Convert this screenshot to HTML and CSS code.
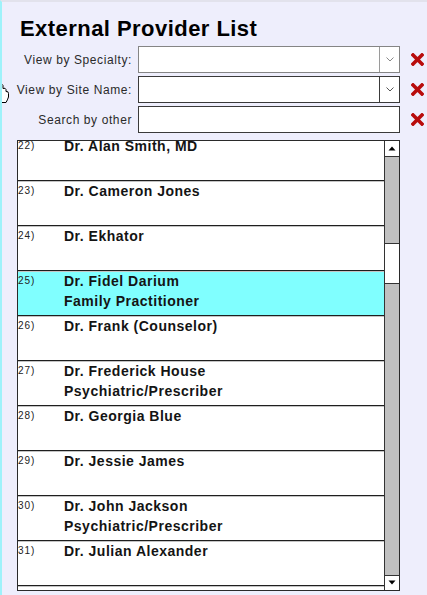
FILE: index.html
```html
<!DOCTYPE html>
<html>
<head>
<meta charset="utf-8">
<title>External Provider List</title>
<link rel="stylesheet" href="styles.css">
</head>
<body>
<div class="page">
  <svg class="cursor" width="9" height="20" viewBox="0 0 9 20"><path d="M0 1.5 Q2.5 0.5 3 2.5 L3 5.5 Q5.5 4.5 6 6.5 L6 8.5 Q8.5 8 8.5 10.5 L8.5 14 Q7.5 17 6 19.5 L0 19.5" fill="#fff" stroke="#000" stroke-width="1"/></svg>
  <h1 class="title">External Provider List</h1>
  <div class="filters">
    <label class="flabel">View by Specialty:</label>
    <div class="field light"><span class="fbox"></span><span class="drop"><svg width="8" height="5" viewBox="0 0 8 5"><polyline points="0.5,0.5 4,4 7.5,0.5" fill="none" stroke="#888" stroke-width="1"/></svg></span></div>
    <span class="clear"><svg width="13" height="13" viewBox="0 0 13 13"><path d="M2 2 L11 11 M11 2 L2 11" stroke="#b80c0c" stroke-width="3.6" stroke-linecap="square"/></svg></span>

    <label class="flabel">View by Site Name:</label>
    <div class="field dark"><span class="fbox"></span><span class="drop"><svg width="8" height="5" viewBox="0 0 8 5"><polyline points="0.5,0.5 4,4 7.5,0.5" fill="none" stroke="#555" stroke-width="1"/></svg></span></div>
    <span class="clear"><svg width="13" height="13" viewBox="0 0 13 13"><path d="M2 2 L11 11 M11 2 L2 11" stroke="#b80c0c" stroke-width="3.6" stroke-linecap="square"/></svg></span>

    <label class="flabel">Search by other</label>
    <div class="field dark"><span class="fbox"></span></div>
    <span class="clear"><svg width="13" height="13" viewBox="0 0 13 13"><path d="M2 2 L11 11 M11 2 L2 11" stroke="#b80c0c" stroke-width="3.6" stroke-linecap="square"/></svg></span>
  </div>

  <div class="list">
    <div class="rows">
      <div class="rows-inner">
        <div class="row"><span class="num">22)</span><div class="name"><div>Dr. Alan Smith, MD</div></div></div>
        <div class="row"><span class="num">23)</span><div class="name"><div>Dr. Cameron Jones</div></div></div>
        <div class="row"><span class="num">24)</span><div class="name"><div>Dr. Ekhator</div></div></div>
        <div class="row selected"><span class="num">25)</span><div class="name"><div>Dr. Fidel Darium</div><div>Family Practitioner</div></div></div>
        <div class="row"><span class="num">26)</span><div class="name"><div>Dr. Frank (Counselor)</div></div></div>
        <div class="row"><span class="num">27)</span><div class="name"><div>Dr. Frederick House</div><div>Psychiatric/Prescriber</div></div></div>
        <div class="row"><span class="num">28)</span><div class="name"><div>Dr. Georgia Blue</div></div></div>
        <div class="row"><span class="num">29)</span><div class="name"><div>Dr. Jessie James</div></div></div>
        <div class="row"><span class="num">30)</span><div class="name"><div>Dr. John Jackson</div><div>Psychiatric/Prescriber</div></div></div>
        <div class="row"><span class="num">31)</span><div class="name"><div>Dr. Julian Alexander</div></div></div>
        <div class="row"><span class="num"></span><div class="name"><div></div></div></div>
      </div>
    </div>
    <div class="scrollbar">
      <div class="sb-btn up"><svg width="14" height="15" viewBox="0 0 14 15"><polygon points="3.5,9.5 7,5.5 10.5,9.5" fill="#000"/></svg></div>
      <div class="sb-track sb-top"></div>
      <div class="sb-thumb"></div>
      <div class="sb-track sb-rest"></div>
      <div class="sb-btn down"><svg width="14" height="14" viewBox="0 0 14 14"><polygon points="3.5,4.5 7,8.5 10.5,4.5" fill="#000"/></svg></div>
    </div>
  </div>
</div>
</body>
</html>
```

FILE: styles.css
```css
* { box-sizing: border-box; }
html, body { margin: 0; padding: 0; }
body {
  font-family: "Liberation Sans", Arial, sans-serif;
  background: #eeeefc;
}
.page {
  position: relative;
  width: 427px;
  height: 595px;
  background: #eeeefc;
  border-top: 2px solid #e2e2ec;
  border-left: 2px solid #9ef2fa;
  overflow: hidden;
}
.cursor {
  position: absolute;
  left: -2px;
  top: 81px;
}
.title {
  margin: 14px 0 4px 18px;
  font-size: 22px;
  line-height: 26px;
  font-weight: bold;
  letter-spacing: 0.45px;
  color: #000;
}
.filters {
  display: grid;
  grid-template-columns: 130px 262px auto;
  grid-auto-rows: 27px;
  column-gap: 6px;
  row-gap: 3px;
}
.flabel {
  align-self: center;
  text-align: right;
  font-size: 12px;
  letter-spacing: 0.6px;
  color: #2a2a2a;
  white-space: nowrap;
  padding-top: 1px;
}
.field {
  display: flex;
  background: #fff;
  border: 1px solid #3a3a3a;
}
.field.light { border-color: #858585; }
.fbox { flex: 1; }
.drop {
  width: 20px;
  border-left: 1px solid #3a3a3a;
  display: flex;
  justify-content: center;
  padding-top: 10px;
}
.field.light .drop { border-left-color: #9a9a9a; }
.drop svg { display: block; }
.clear {
  display: flex;
  align-items: center;
  margin-left: 5px;
}
.clear svg { display: block; }

.list {
  margin: 7px 0 0 15px;
  width: 383px;
  height: 451px;
  border: 1px solid #2a2a2a;
  background: #fff;
  display: flex;
}
.rows {
  flex: 1;
  overflow: hidden;
}
.rows-inner { margin-top: -5px; }
.row {
  display: flex;
  height: 45px;
  background: #fff;
  border-top: 1px solid #c4c4c4;
  border-bottom: 1px solid #1e1e1e;
}
.row.selected { background: #80ffff; }
.num {
  width: 46px;
  flex: none;
  font-size: 10px;
  line-height: 12px;
  margin-top: 3px;
  letter-spacing: 0.9px;
  color: #222;
}
.name {
  font-size: 14px;
  line-height: 19.5px;
  font-weight: bold;
  letter-spacing: 0.5px;
  color: #141414;
}
.scrollbar {
  width: 15px;
  flex: none;
  border-left: 1px solid #333;
  display: flex;
  flex-direction: column;
}
.sb-btn {
  background: #fff;
  flex: none;
}
.sb-btn svg { display: block; }
.sb-btn.up { height: 16px; border-bottom: 1px solid #333; }
.sb-btn.down { height: 15px; border-top: 1px solid #333; }
.sb-track { background: #c0c0c0; }
.sb-top { height: 86px; flex: none; }
.sb-thumb {
  height: 41px;
  flex: none;
  background: #fff;
  border-top: 1px solid #333;
  border-bottom: 1px solid #333;
}
.sb-rest { flex: 1; }
```
